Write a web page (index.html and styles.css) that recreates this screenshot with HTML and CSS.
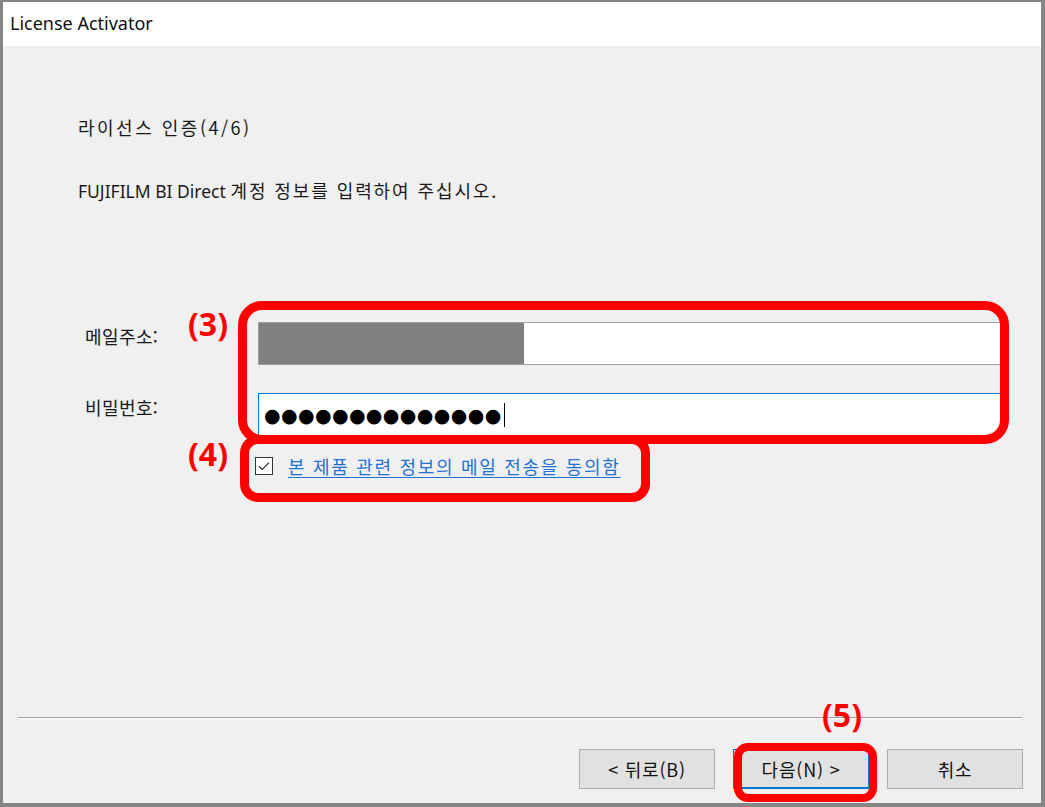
FILE: index.html
```html
<!DOCTYPE html>
<html lang="ko">
<head>
<meta charset="utf-8">
<title>License Activator</title>
<link rel="stylesheet" href="styles.css">
</head>
<body>
<div class="window">
  <div class="titlebar">License Activator</div>
  <div class="content">
    <div class="heading">라이선스 인증(4/6)</div>
    <div class="desc"><span class="latin">FUJIFILM BI Direct</span> <span class="ko">계정 정보를 입력하여 주십시오.</span></div>
    <div class="form">
      <div class="row">
        <div class="label">메일주소:</div>
        <div class="input email"><span class="redact"></span></div>
      </div>
      <div class="row row-pw">
        <div class="label">비밀번호:</div>
        <div class="input pw"><span class="dots">●●●●●●●●●●●●●●</span><span class="caret"></span></div>
      </div>
      <div class="row row-check">
        <span class="checkbox"><svg width="18" height="18" viewBox="0 0 18 18"><rect x="0.5" y="0.5" width="17" height="17" fill="#fff" stroke="#333"/><path d="M4 9.2 L7.3 12.4 L14 5.6" fill="none" stroke="#333" stroke-width="1.3"/></svg></span>
        <a class="link">본 제품 관련 정보의 메일 전송을 동의함</a>
      </div>
    </div>
  </div>
  <div class="footer">
    <div class="sep"></div>
    <div class="buttons">
      <button class="btn">&lt; 뒤로(B)</button>
      <button class="btn btn-default">다음(N) &gt;</button>
      <button class="btn">취소</button>
    </div>
  </div>

  <div class="mark box3"></div>
  <div class="mark box4"></div>
  <div class="mark box5"></div>
  <div class="num num3">(3)</div>
  <div class="num num4">(4)</div>
  <div class="num num5">(5)</div>
</div>
</body>
</html>
```

FILE: styles.css
```css
* { box-sizing: border-box; }
html, body { margin: 0; padding: 0; background: #ffffff; }
body {
  font-family: "Noto Sans", "Noto Sans CJK KR", sans-serif;
  color: #1a1a1a;
}
.window {
  position: relative;
  width: 1045px;
  height: 807px;
  border-style: solid;
  border-color: #858585;
  border-width: 2px 4px 4px 3px;
  display: flex;
  flex-direction: column;
  background: #f0f0f0;
  overflow: hidden;
}
.titlebar {
  height: 44px;
  background: #ffffff;
  padding-left: 7px;
  font-size: 18px;
  line-height: 43px;
  color: #111;
}
.content {
  flex: 1;
  padding: 70px 0 0 75px;
}
.heading {
  font-family: "Noto Sans CJK KR", sans-serif;
  font-size: 18px;
  letter-spacing: 2.5px;
  line-height: 22px;
  height: 22px;
}
.desc {
  margin-top: 41px;
  font-size: 18px;
  line-height: 22px;
}
.desc .latin {
  font-family: "Noto Sans", sans-serif;
  font-size: 17.5px;
}
.desc .ko {
  font-family: "Noto Sans CJK KR", sans-serif;
  letter-spacing: 1.9px;
}
.form {
  margin-top: 120px;
}
.row {
  display: flex;
  align-items: flex-start;
  height: 43px;
}
.row-pw { margin-top: 28px; }
.label {
  width: 180px;
  padding: 3px 0 0 7px;
  line-height: 22px;
  font-family: "Noto Sans CJK KR", sans-serif;
  font-size: 18px;
  letter-spacing: 0.4px;
}
.input {
  width: 744px;
  height: 43px;
  background: #fff;
  border: 1px solid #a0a0a0;
  display: flex;
  align-items: center;
}
.redact {
  display: block;
  width: 265px;
  height: 41px;
  background: #808080;
}
.pw {
  border-color: #0078d7;
  padding-left: 5px;
}
.dots {
  font-family: "DejaVu Sans", sans-serif;
  font-size: 19px;
  letter-spacing: 0.4px;
  color: #000;
  line-height: 20px;
}
.caret {
  display: inline-block;
  width: 1px;
  height: 24px;
  background: #000;
  margin-left: 2px;
}
.row-check {
  margin-top: 19px;
  height: 22px;
  padding-left: 177px;
  align-items: center;
}
.checkbox { display: flex; width: 18px; height: 18px; }
.link {
  margin-left: 15px;
  font-family: "Noto Sans CJK KR", sans-serif;
  font-size: 18px;
  letter-spacing: 1.7px;
  color: #1f72d2;
  text-decoration: underline;
  text-underline-offset: 3px;
}
.footer {
  height: 86px;
  flex: none;
}
.sep {
  margin: 0 19px 0 15px;
  height: 2px;
  border-top: 1px solid #a0a0a0;
  border-bottom: 1px solid #ffffff;
}
.buttons {
  display: flex;
  justify-content: flex-end;
  gap: 18px;
  margin-top: 30px;
  padding-right: 18px;
}
.btn {
  width: 136px;
  height: 40px;
  background: #e1e1e1;
  border: 1px solid #adadad;
  font-family: "Noto Sans CJK KR", sans-serif;
  font-size: 18px;
  letter-spacing: 0.8px;
  color: #111;
  padding: 0;
}
.btn-default {
  border: 1px solid #0078d7;
  border-bottom-width: 2px;
}
.mark {
  position: absolute;
  border: 9px solid #ff0000;
}
.box3 { left: 235px; top: 299px; width: 771px; height: 143px; border-radius: 24px; }
.box4 { left: 237px; top: 433px; width: 410px; height: 67px; border-radius: 18px; }
.box5 { left: 731px; top: 741px; width: 143px; height: 59px; border-radius: 14px; border-width: 8px; }
.num {
  position: absolute;
  font-family: "Open Sans", sans-serif;
  font-weight: 700;
  font-size: 32px;
  line-height: 34px;
  color: #ff0000;
}
.num3 { left: 185px; top: 305px; }
.num4 { left: 185px; top: 435px; }
.num5 { left: 819px; top: 696px; }
```
